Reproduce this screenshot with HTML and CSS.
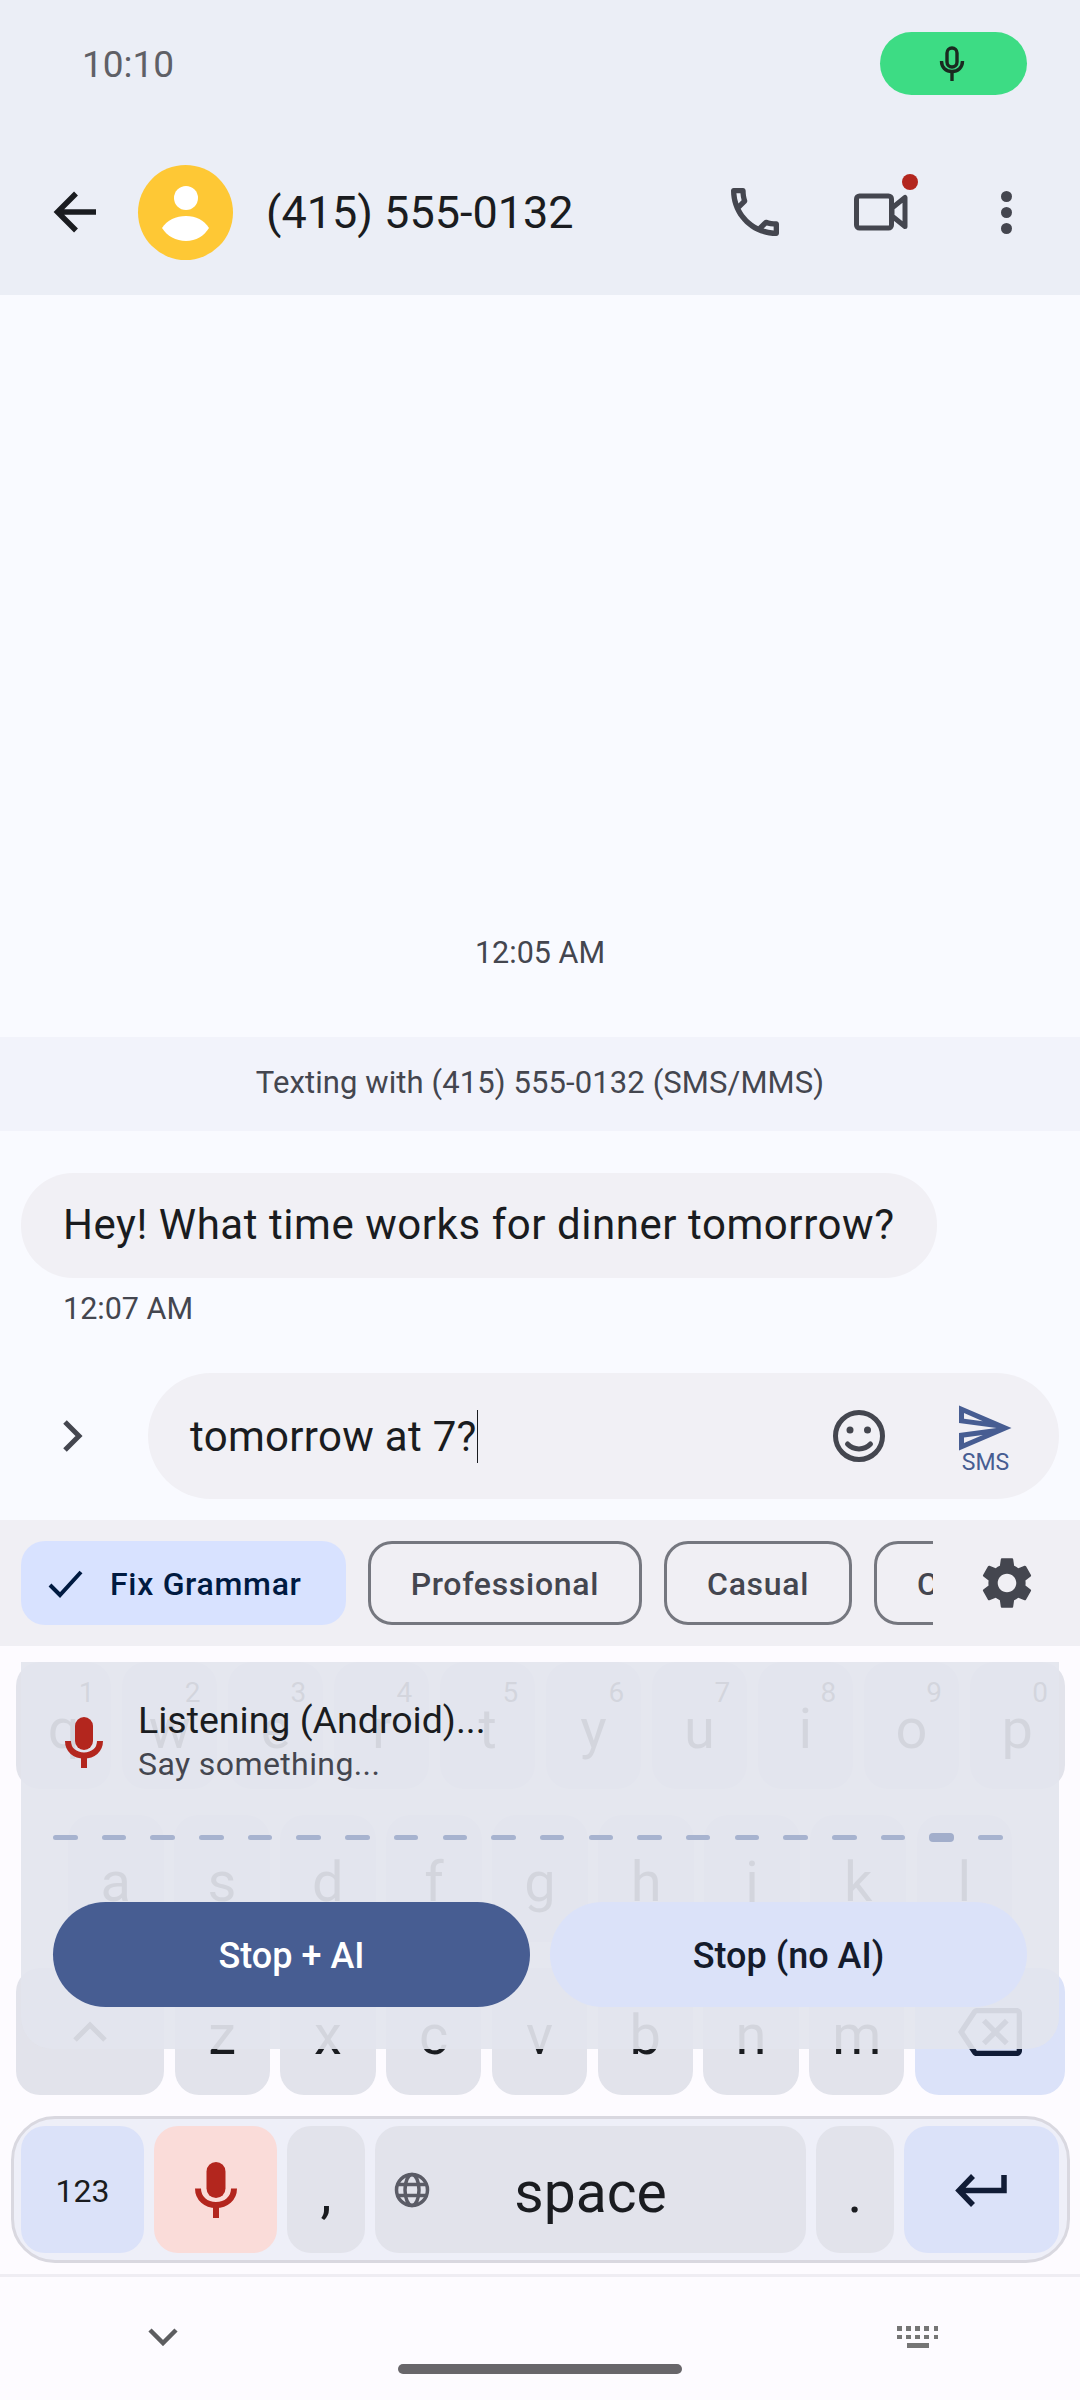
FILE: index.html
```html
<!DOCTYPE html>
<html lang="en">
<head>
    <meta charset="UTF-8">
    <meta name="viewport" content="width=device-width, initial-scale=1.0">
    <title>Messages</title>
    <link rel="stylesheet" href="styles.css">
</head>
<body>
    <div class="phone">
        <!-- Status bar -->
        <div class="status-bar">
            <span class="clock">10:10</span>
            <div class="mic-pill">
                <svg width="26" height="36" viewBox="0 0 26 36" fill="none" stroke="#1a2a20" stroke-width="3.4">
                    <rect x="8" y="2" width="10" height="19" rx="5"/>
                    <path d="M2.5 15c0 6.5 4.5 10.5 10.5 10.5S23.500 21.500 23.500 15"/>
                    <path d="M13 25v10"/>
                </svg>
            </div>
        </div>

        <!-- Conversation header -->
        <div class="top-bar">
            <svg class="back-icon" width="44" height="44" viewBox="0 0 44 44" fill="none" stroke="#1a1c20" stroke-width="5.500">
                <path d="M43 22H5M23 3.500 4.500 22 23 40.500"/>
            </svg>
            <div class="avatar">
                <svg width="95" height="95" viewBox="0 0 95 95" fill="#fff">
                    <circle cx="48" cy="33" r="12"/>
                    <path d="M24 63c5-8 14-12 24-12s18 4 23 12c-5 8-13 13-23 13s-19-5-24-13z"/>
                </svg>
            </div>
            <span class="contact-name">(415) 555-0132</span>
            <div class="top-actions">
                <svg class="call-icon" width="64" height="64" viewBox="0 0 24 24" fill="#44464f"><path d="M6.54 5c.06.89.21 1.76.45 2.59l-1.2 1.2c-.41-1.2-.67-2.47-.76-3.79h1.51m9.86 12.02c.85.24 1.72.39 2.6.45v1.49c-1.32-.09-2.59-.35-3.8-.75l1.2-1.19M7.5 3H4c-.55 0-1 .45-1 1 0 9.39 7.61 17 17 17 .55 0 1-.45 1-1v-3.49c0-.55-.45-1-1-1-1.24 0-2.45-.2-3.57-.57-.1-.04-.21-.05-.31-.05-.26 0-.51.1-.71.29l-2.2 2.2c-2.83-1.45-5.15-3.76-6.59-6.59l2.2-2.2c.28-.28.36-.67.25-1.02C8.7 6.45 8.5 5.25 8.5 4c0-.55-.45-1-1-1z"/></svg>
                <div class="video-btn">
                    <svg width="54" height="38" viewBox="0 0 54 38" fill="none" stroke="#44464f" stroke-width="5" stroke-linejoin="round">
                        <rect x="2.500" y="3" width="35" height="32" rx="3"/>
                        <path d="M38 15 51 4.500v29L38 23z"/>
                    </svg>
                    <span class="rec-dot"></span>
                </div>
                <div class="more-btn"><span></span><span></span><span></span></div>
            </div>
        </div>

        <!-- Messages -->
        <div class="thread">
            <div class="thread-time">12:05 AM</div>
            <div class="sms-banner">Texting with (415) 555-0132 (SMS/MMS)</div>
            <div class="bubble">Hey! What time works for dinner tomorrow?</div>
            <div class="msg-time">12:07 AM</div>
        </div>

        <!-- Compose box -->
        <div class="composer">
            <svg class="expand-icon" width="24" height="34" viewBox="0 0 24 34" fill="none" stroke="#44464f" stroke-width="5"><path d="M4 3l14 14L4 31"/></svg>
            <div class="compose-pill">
                <span class="compose-text">tomorrow at 7?</span>
                <span class="caret"></span>
                <svg class="emoji-icon" width="54" height="54" viewBox="0 0 54 54" fill="none" stroke="#44464f" stroke-width="5">
                    <circle cx="27" cy="27" r="23.500"/>
                    <circle cx="18" cy="21" r="3.500" fill="#44464f" stroke="none"/>
                    <circle cx="35.500" cy="21" r="3.500" fill="#44464f" stroke="none"/>
                    <path d="M15.500 35c6 6.500 17 6.500 23 0" stroke-linecap="round"/>
                </svg>
                <div class="send-btn">
                    <svg width="60" height="60" viewBox="0 0 24 24" fill="#475d92"><path d="M4.010 6.030l7.510 3.220-7.520-1 .01-2.220m7.500 8.720L4 17.970v-2.220l7.510-1M2.010 3L2 10l15 2-15 2 .01 7L23 12 2.010 3z"/></svg>
                    <span class="send-label">SMS</span>
                </div>
            </div>
        </div>

        <!-- Suggestion chips -->
        <div class="chip-bar">
            <div class="chips">
                <div class="chip chip-on">
                    <svg width="36" height="28" viewBox="0 0 36 28" fill="none" stroke="#001a41" stroke-width="4"><path d="M2 15l10 10L33 2"/></svg>
                    <span>Fix Grammar</span>
                </div>
                <div class="chip">Professional</div>
                <div class="chip">Casual</div>
                <div class="chip">Concise</div>
            </div>
            <svg class="gear-icon" width="62" height="62" viewBox="0 0 24 24" fill="#44464f"><path d="M19.140 12.940c.04-.3.06-.61.06-.94 0-.32-.02-.64-.07-.94l2.030-1.580c.18-.14.23-.41.12-.61l-1.920-3.320c-.12-.22-.37-.29-.59-.22l-2.390.96c-.5-.38-1.030-.7-1.620-.94l-.36-2.540c-.04-.24-.24-.41-.48-.41h-3.840c-.24 0-.43.17-.47.41l-.36 2.540c-.59.24-1.130.57-1.620.94l-2.390-.96c-.22-.08-.47 0-.59.22L2.740 8.870c-.12.21-.08.47.12.61l2.030 1.580c-.05.3-.09.63-.09.94s.02.64.07.94l-2.030 1.580c-.18.14-.23.41-.12.61l1.920 3.320c.12.22.37.29.59.22l2.390-.96c.5.38 1.030.7 1.620.94l.36 2.540c.05.24.24.41.48.41h3.840c.24 0 .44-.17.47-.41l.36-2.540c.59-.24 1.130-.56 1.620-.94l2.390.96c.22.08.47 0 .59-.22l1.920-3.320c.12-.22.07-.47-.12-.61l-2.010-1.580zM12 15.600c-1.980 0-3.600-1.620-3.600-3.600s1.620-3.600 3.600-3.600 3.600 1.620 3.600 3.600-1.620 3.600-3.600 3.600z"/></svg>
        </div>

        <!-- Keyboard -->
        <div class="keyboard">
            <div class="key-row row-top">
                <div class="key">q<span class="hint">1</span></div>
                <div class="key">w<span class="hint">2</span></div>
                <div class="key">e<span class="hint">3</span></div>
                <div class="key">r<span class="hint">4</span></div>
                <div class="key">t<span class="hint">5</span></div>
                <div class="key">y<span class="hint">6</span></div>
                <div class="key">u<span class="hint">7</span></div>
                <div class="key">i<span class="hint">8</span></div>
                <div class="key">o<span class="hint">9</span></div>
                <div class="key">p<span class="hint">0</span></div>
            </div>
            <div class="key-row row-mid">
                <div class="key">a</div>
                <div class="key">s</div>
                <div class="key">d</div>
                <div class="key">f</div>
                <div class="key">g</div>
                <div class="key">h</div>
                <div class="key">j</div>
                <div class="key">k</div>
                <div class="key">l</div>
            </div>
            <div class="key-row row-low">
                <div class="key key-shift">
                    <svg width="36" height="22" viewBox="0 0 36 22" fill="none" stroke="#1a1c20" stroke-width="5"><path d="M3 19 18 4l15 15"/></svg>
                </div>
                <div class="key">z</div>
                <div class="key">x</div>
                <div class="key">c</div>
                <div class="key">v</div>
                <div class="key">b</div>
                <div class="key">n</div>
                <div class="key">m</div>
                <div class="key key-back">
                    <svg width="64" height="64" viewBox="0 0 24 24" fill="#111c36"><path d="M22 3H7c-.69 0-1.230.35-1.590.88L0 12l5.410 8.110c.36.53.9.89 1.590.89h15c1.100 0 2-.9 2-2V5c0-1.100-.9-2-2-2zm0 16H7.070L2.400 12l4.660-7H22v14zm-11.590-2L14 13.410 17.590 17 19 15.590 15.410 12 19 8.410 17.590 7 14 10.590 10.410 7 9 8.410 12.590 12 9 15.590z"/></svg>
                </div>
            </div>

            <div class="tool-row">
                <div class="key key-num">123</div>
                <div class="key key-voice">
                    <svg width="42" height="58" viewBox="0 0 42 58" fill="none">
                        <rect x="11.500" y="1" width="19" height="36" rx="9.500" fill="#b3261e"/>
                        <path d="M3 27.500c0 10 8 16.500 18 16.500s18-6.500 18-16.500" stroke="#b3261e" stroke-width="6"/>
                        <path d="M21 44v13" stroke="#b3261e" stroke-width="6"/>
                    </svg>
                </div>
                <div class="key key-punct">,</div>
                <div class="key key-space">
                    <svg class="globe" width="36" height="36" viewBox="0 0 36 36" fill="none" stroke="#5b5c66" stroke-width="3.500">
                        <circle cx="18" cy="18" r="15.500"/>
                        <ellipse cx="18" cy="18" rx="7" ry="15.500"/>
                        <path d="M3.500 12.500h29M3.500 23.500h29"/>
                    </svg>
                    space
                </div>
                <div class="key key-punct">.</div>
                <div class="key key-enter">
                    <svg width="54" height="34" viewBox="0 0 54 34" fill="none" stroke="#111c36" stroke-width="5.500"><path d="M49 2v15.500H6M18 3 4 17.500 18 32"/></svg>
                </div>
            </div>

            <!-- Voice input panel, sits over the keys -->
            <div class="voice-panel">
                <div class="voice-head">
                    <svg width="38" height="52" viewBox="0 0 38 52" fill="none">
                        <rect x="10" y="1" width="18" height="33" rx="9" fill="#b3261e"/>
                        <path d="M3 25c0 9 7 14.500 16 14.500S35 34 35 25" stroke="#b3261e" stroke-width="6"/>
                        <path d="M19 39v13" stroke="#b3261e" stroke-width="6"/>
                    </svg>
                    <div class="voice-text">
                        <div class="voice-title">Listening (Android)...</div>
                        <div class="voice-sub">Say something...</div>
                    </div>
                </div>
                <div class="level-dashes">
                    <span></span><span></span><span></span><span></span><span></span>
                    <span></span><span></span><span></span><span></span><span></span>
                    <span></span><span></span><span></span><span></span><span></span>
                    <span></span><span></span><span></span><span class="dash-peak"></span><span></span>
                </div>
                <div class="voice-buttons">
                    <div class="pill-btn pill-main">Stop + AI</div>
                    <div class="pill-btn pill-alt">Stop (no AI)</div>
                </div>
            </div>
        </div>

        <!-- Gesture nav -->
        <div class="nav-bar">
            <div class="nav-icons">
                <svg width="30" height="18" viewBox="0 0 30 18" fill="none" stroke="#5d5d60" stroke-width="4.500"><path d="M2 2l13 13L28 2"/></svg>
                <div class="kb-icon">
                    <div class="kb-dots"><i></i><i></i><i></i><i></i><i></i></div>
                    <div class="kb-dots"><i></i><i></i><i></i><i></i><i></i></div>
                    <div class="kb-bar"></div>
                </div>
            </div>
            <div class="home-handle"></div>
        </div>
    </div>
</body>
</html>
```

FILE: styles.css
```css
* {
    margin: 0;
    padding: 0;
    box-sizing: border-box;
}
body {
    font-family: 'Roboto', 'Noto Sans', sans-serif;
    background: #fdfbff;
    color: #1a1c20;
}
.phone {
    width: 1080px;
    height: 2400px;
    display: flex;
    flex-direction: column;
    overflow: hidden;
}

/* status bar */
.status-bar {
    height: 129px;
    background: #ebeef6;
    display: flex;
    align-items: flex-start;
    justify-content: space-between;
    padding: 32px 53px 0 82px;
}
.clock {
    font-size: 37px;
    line-height: 65px;
    color: #5f6066;
}
.mic-pill {
    width: 147px;
    height: 63px;
    border-radius: 32px;
    background: #3ddc84;
    display: flex;
    align-items: center;
    justify-content: center;
    padding-right: 3px;
}

/* header */
.top-bar {
    height: 166px;
    background: #ebeef6;
    display: flex;
    align-items: center;
    padding: 0 0 0 53px;
}
.back-icon {
    margin-right: 41px;
}
.avatar {
    width: 95px;
    height: 95px;
    border-radius: 50%;
    background: #fec835;
    margin-right: 33px;
}
.contact-name {
    font-size: 45px;
    flex: 1;
}
.top-actions {
    display: flex;
    align-items: center;
}
.call-icon {
    margin-right: 67px;
}
.video-btn {
    position: relative;
    display: flex;
    margin-right: 93px;
}
.rec-dot {
    position: absolute;
    top: -19px;
    right: -10px;
    width: 16px;
    height: 16px;
    border-radius: 50%;
    background: #b3261e;
}
.more-btn {
    display: flex;
    flex-direction: column;
    gap: 5px;
    margin-right: 68px;
}
.more-btn span {
    width: 11px;
    height: 11px;
    border-radius: 50%;
    background: #44464f;
}

/* thread */
.thread {
    flex: 1;
    background: #f9faff;
    display: flex;
    flex-direction: column;
    justify-content: flex-end;
}
.thread-time {
    text-align: center;
    font-size: 30.500px;
    line-height: 42px;
    color: #44464f;
    margin-bottom: 63px;
}
.sms-banner {
    height: 94px;
    background: #f2f3fb;
    text-align: center;
    font-size: 31px;
    line-height: 92px;
    letter-spacing: 0.1px;
    color: #44464f;
}
.bubble {
    align-self: flex-start;
    width: 916px;
    height: 105px;
    margin: 42px 0 0 21px;
    padding-left: 42px;
    border-radius: 52px;
    background: #f1f0f5;
    font-size: 42px;
    line-height: 103px;
    letter-spacing: 0.55px;
}
.msg-time {
    font-size: 30.500px;
    line-height: 42px;
    color: #44464f;
    margin: 10px 0 43px 63px;
}

/* composer */
.composer {
    height: 147px;
    background: #f9faff;
    display: flex;
    align-items: flex-start;
    padding-left: 61px;
}
.expand-icon {
    margin: 46px 63px 0 0;
}
.compose-pill {
    width: 911px;
    height: 126px;
    border-radius: 63px;
    background: #f1f0f5;
    display: flex;
    align-items: center;
    padding: 0 45px 0 42px;
}
.compose-text {
    font-size: 42px;
    letter-spacing: 0.3px;
}
.caret {
    width: 1.500px;
    height: 53px;
    background: #1a1c20;
}
.emoji-icon {
    margin-left: auto;
}
.send-btn {
    display: flex;
    flex-direction: column;
    align-items: center;
    margin-left: 68px;
}
.send-btn svg {
    margin-bottom: -6px;
}
.send-label {
    padding-left: 3px;
    font-size: 23px;
    line-height: 22px;
    color: #475d92;
}

/* chips */
.chip-bar {
    height: 126px;
    background: #f0eff4;
    display: flex;
    align-items: center;
}
.chips {
    width: 933px;
    display: flex;
    gap: 22px;
    padding-left: 21px;
    overflow: hidden;
}
.chip {
    height: 84px;
    flex: none;
    display: flex;
    align-items: center;
    padding: 1px 40px 0;
    border: 3px solid #75777f;
    border-radius: 24px;
    font-size: 32px;
    font-weight: 500;
    letter-spacing: 0.7px;
    color: #44464f;
}
.chip-on {
    border: none;
    background: #d8e2ff;
    color: #001a41;
    padding: 1px 44px 0 27px;
    gap: 26px;
}
.gear-icon {
    margin-left: 43px;
}

/* keyboard */
.keyboard {
    position: relative;
    height: 628px;
    flex: none;
    background: #fdfbff;
    padding-top: 16px;
}
.key-row {
    display: flex;
    height: 127px;
    gap: 10.500px;
    margin-bottom: 26px;
}
.key {
    position: relative;
    height: 127px;
    border-radius: 24px;
    background: #e2e3eb;
    display: flex;
    align-items: center;
    justify-content: center;
    padding-top: 6px;
    font-size: 56px;
    line-height: 1;
    color: #1a1c20;
}
.row-top {
    padding: 0 15px 0 16px;
}
.row-top .key {
    flex: 1;
}
.row-mid {
    padding: 0 68px;
}
.row-mid .key {
    flex: 1;
}
.row-low {
    padding: 0 15px 0 16px;
    margin-bottom: 21px;
}
.row-low .key {
    flex: 1;
}
.row-low .key-shift,
.row-low .key-back {
    flex: none;
    width: 148px;
    padding-top: 0;
}
.row-low .key-back {
    width: 150px;
    background: #dbe2f9;
}
.hint {
    position: absolute;
    top: 13px;
    right: 17px;
    font-size: 28px;
    line-height: 36px;
}
.tool-row {
    display: flex;
    gap: 10px;
    margin: 0 10px 0 11px;
    height: 147px;
    padding: 7px 8px 7px 7px;
    border: 3px solid #d9d8e0;
    border-radius: 44px;
    background: #eeeff8;
}
.tool-row .key {
    height: 127px;
}
.key-num {
    width: 123px;
    background: #dbe2f9;
    font-size: 32px;
    padding-top: 3px;
}
.key-voice {
    width: 123px;
    background: #fadcd9;
    padding-top: 0;
}
.key-punct {
    width: 78px;
}
.key-space {
    flex: 1;
    font-size: 57px;
}
.globe {
    position: absolute;
    left: 19px;
    top: 46px;
}
.key-enter {
    width: 155px;
    background: #dbe2f9;
    padding-top: 0;
}

/* voice panel */
.voice-panel {
    position: absolute;
    top: 16px;
    left: 21px;
    width: 1038px;
    height: 387px;
    padding: 37px 32px 0;
    border-radius: 0 0 32px 32px;
    background: rgba(227, 229, 238, 0.92);
}
.voice-head {
    display: flex;
    align-items: center;
    gap: 35px;
    height: 84px;
}
.voice-head svg {
    margin: 2px 0 0 12px;
    flex: none;
}
.voice-title {
    font-size: 37.500px;
    line-height: 46px;
}
.voice-sub {
    font-size: 32px;
    line-height: 43px;
    color: #44464f;
    letter-spacing: 0.4px;
}
.level-dashes {
    display: flex;
    align-items: center;
    gap: 24.200px;
    height: 10px;
    margin-top: 49px;
}
.level-dashes span {
    width: 24.500px;
    height: 5px;
    border-radius: 3px;
    background: #a7b3cf;
}
.level-dashes .dash-peak {
    height: 9px;
    border-radius: 4px;
    background: #a2aecb;
}
.voice-buttons {
    display: flex;
    gap: 20px;
    margin-top: 60px;
}
.pill-btn {
    width: 477px;
    height: 105px;
    border-radius: 53px;
    display: flex;
    align-items: center;
    justify-content: center;
    padding-top: 2px;
    font-size: 36px;
    font-weight: 500;
}
.pill-main {
    background: #475d92;
    color: #fff;
}
.pill-alt {
    background: #dbe2f9;
    color: #141b2c;
}

/* nav */
.nav-bar {
    height: 126px;
    flex: none;
    border-top: 3px solid #efedf3;
    background: #fdfbff;
}
.nav-icons {
    display: flex;
    align-items: center;
    justify-content: space-between;
    height: 26px;
    margin-top: 47px;
    padding: 0 142px 0 148px;
}
.kb-icon {
    width: 41px;
    display: flex;
    flex-direction: column;
    gap: 4px;
}
.kb-dots {
    display: flex;
    justify-content: space-between;
}
.kb-dots i {
    width: 4.500px;
    height: 4.500px;
    background: #757575;
}
.kb-bar {
    width: 22px;
    height: 4.500px;
    margin: 0 auto;
    background: #757575;
}
.home-handle {
    width: 284px;
    height: 10px;
    margin: 14px auto 0;
    border-radius: 5px;
    background: #68666a;
}
```
